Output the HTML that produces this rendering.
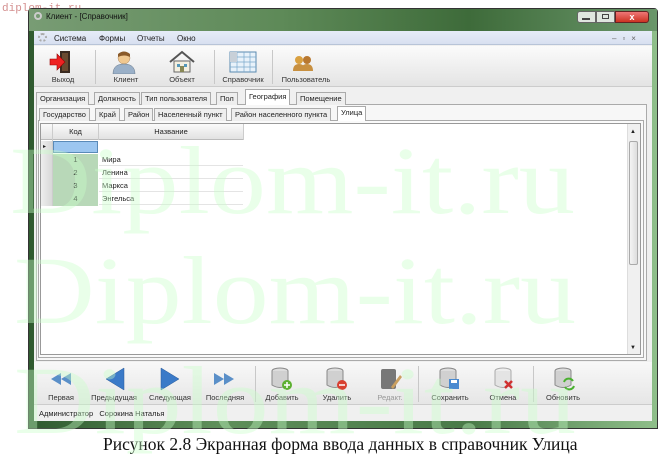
<!DOCTYPE html>
<html><head><meta charset="utf-8">
<style>
*{margin:0;padding:0;box-sizing:border-box}
body{width:671px;height:460px;background:#fff;position:relative;overflow:hidden;font-family:"Liberation Sans","DejaVu Sans",sans-serif;font-size:8px;color:#222}
.a{position:absolute}
.tab{position:absolute;height:13px;border:1px solid #aaa;border-bottom:none;background:#eee;font-size:7.5px;line-height:12px;padding:0 3px;white-space:nowrap}
.btn{position:absolute;text-align:center;font-size:7.5px;color:#333}
.sep{position:absolute;width:1px;background:#c8c8c8}
.cell{position:absolute;font-size:7.5px;line-height:12px}
</style></head><body>
<div class="a" style="left:2px;top:3px;font-family:'Liberation Mono',monospace;font-size:11px;color:#d49090">diplom-it.ru</div>
<div class="a" style="left:28px;top:8px;width:630px;height:421px;background:linear-gradient(90deg,#2f5a2f,#5f8f5a 30%,#497a48 70%,#8fbf8a);border:1px solid #333;border-radius:4px 4px 0 0"></div>
<div class="a" style="left:29px;top:9px;width:628px;height:22px;background:linear-gradient(90deg,#789c74,#5e8a58 40%,#3e6b3a 70%,#6a966a)"></div>
<div class="a" style="left:34px;top:12px;width:8px;height:8px;border-radius:50%;border:2px solid #ccc"></div>
<div class="a" style="left:46px;top:12px;font-size:8px;color:#111">Клиент - [Справочник]</div>
<div class="a" style="left:577px;top:11px;width:19px;height:12px;background:#dfe6df;border:1px solid #666;border-radius:3px 0 0 3px"></div>
<div class="a" style="left:582px;top:18px;width:8px;height:2px;background:#444"></div>
<div class="a" style="left:596px;top:11px;width:19px;height:12px;background:#dfe6df;border:1px solid #666"></div>
<div class="a" style="left:602px;top:14px;width:7px;height:5px;border:1px solid #444"></div>
<div class="a" style="left:615px;top:11px;width:34px;height:12px;background:linear-gradient(#e77,#c32);border:1px solid #622;border-radius:0 3px 3px 0;color:#fff;font-size:9px;text-align:center;line-height:10px;font-weight:bold">x</div>
<div class="a" style="left:34px;top:31px;width:618px;height:390px;background:#f0f0f0"></div>
<div class="a" style="left:34px;top:31px;width:618px;height:14px;background:linear-gradient(#e6ecf8,#d8e0f0);border-bottom:1px solid #b8c4d8"></div>
<div class="a" style="left:38px;top:33px;width:9px;height:9px;border-radius:50%;border:2px dotted #aaa"></div>
<div class="a" style="left:54px;top:34px;font-size:8px">Система</div>
<div class="a" style="left:99px;top:34px;font-size:8px">Формы</div>
<div class="a" style="left:137px;top:34px;font-size:8px">Отчеты</div>
<div class="a" style="left:177px;top:34px;font-size:8px">Окно</div>
<div class="a" style="left:612px;top:34px;font-size:8px;color:#666;letter-spacing:6px">–▫×</div>
<div class="a" style="left:34px;top:46px;width:618px;height:41px;background:linear-gradient(#fbfbfb,#e4e4e4);border-bottom:1px solid #ccc"></div>
<svg class="a" style="left:48px;top:50px" width="28" height="24"><rect x="12" y="1" width="10" height="22" fill="#3a2a20"/><rect x="14" y="3" width="6" height="18" fill="#6a4a30"/><path d="M2 9h7v-5l8 8-8 8v-5H2z" fill="#e22" stroke="#900" stroke-width=".6"/></svg>
<div class="btn" style="left:46px;top:75px;width:34px">Выход</div>
<div class="sep" style="left:95px;top:50px;height:34px"></div>
<svg class="a" style="left:112px;top:50px" width="24" height="24"><circle cx="12" cy="8" r="6" fill="#f0c890" stroke="#a86" stroke-width=".5"/><path d="M6 4q6-5 12 0v3q-6-3-12 0z" fill="#8a5a2a"/><path d="M1 24q0-10 11-10t11 10z" fill="#9ab0c8" stroke="#678" stroke-width=".5"/></svg>
<div class="btn" style="left:106px;top:75px;width:40px">Клиент</div>
<svg class="a" style="left:168px;top:50px" width="28" height="24"><path d="M2 12L14 2l12 10" fill="none" stroke="#555" stroke-width="2"/><rect x="6" y="11" width="16" height="11" fill="#f4f0e0" stroke="#666"/><rect x="9" y="14" width="3" height="3" fill="#59b"/><rect x="16" y="14" width="3" height="3" fill="#59b"/><rect x="12" y="16" width="4" height="6" fill="#885"/></svg>
<div class="btn" style="left:162px;top:75px;width:40px">Объект</div>
<div class="sep" style="left:214px;top:50px;height:34px"></div>
<svg class="a" style="left:229px;top:51px" width="28" height="22"><rect x="1" y="1" width="26" height="20" fill="#e8f2fa" stroke="#5a8ab0"/><path d="M1 6h26M1 11h26M1 16h26M8 1v20M15 1v20M21 1v20" stroke="#7aa8cc" stroke-width=".7"/><rect x="1" y="1" width="7" height="10" fill="#c8d0d8"/></svg>
<div class="btn" style="left:219px;top:75px;width:48px">Справочник</div>
<div class="sep" style="left:272px;top:50px;height:34px"></div>
<svg class="a" style="left:293px;top:55px" width="20" height="16"><circle cx="6" cy="5" r="4" fill="#d9a040"/><circle cx="14" cy="5" r="4" fill="#b87830"/><path d="M0 16q0-7 6-7t6 7zM8 16q0-7 6-7t6 7z" fill="#c89040"/></svg>
<div class="btn" style="left:278px;top:75px;width:56px">Пользователь</div>
<div class="a" style="left:36px;top:104px;width:611px;height:257px;border:1px solid #aaa;background:#f7f7f7"></div>
<div class="tab" style="left:36px;top:92px">Организация</div>
<div class="tab" style="left:94px;top:92px">Должность</div>
<div class="tab" style="left:141px;top:92px">Тип пользователя</div>
<div class="tab" style="left:216px;top:92px">Пол</div>
<div class="tab" style="left:245px;top:89px;height:16px;background:#fff;padding-top:1px">География</div>
<div class="tab" style="left:296px;top:92px">Помещение</div>
<div class="a" style="left:38px;top:120px;width:606px;height:238px;border:1px solid #aaa;background:#fafafa"></div>
<div class="tab" style="left:39px;top:108px">Государство</div>
<div class="tab" style="left:95px;top:108px">Край</div>
<div class="tab" style="left:124px;top:108px">Район</div>
<div class="tab" style="left:154px;top:108px">Населенный пункт</div>
<div class="tab" style="left:231px;top:108px">Район населенного пункта</div>
<div class="tab" style="left:337px;top:106px;height:15px;background:#fff">Улица</div>
<div class="a" style="left:40px;top:123px;width:601px;height:232px;border:1px solid #999;background:#fff"></div>
<div class="a" style="left:41px;top:124px;width:202px;height:16px;background:linear-gradient(#fafafa,#e2e2e2);border-bottom:1px solid #bbb"></div>
<div class="a" style="left:52px;top:124px;width:1px;height:82px;background:#ccc"></div>
<div class="a" style="left:98px;top:124px;width:1px;height:16px;background:#ccc"></div>
<div class="a" style="left:243px;top:124px;width:1px;height:16px;background:#ccc"></div>
<div class="cell" style="left:53px;top:126px;width:45px;text-align:center">Код</div>
<div class="cell" style="left:99px;top:126px;width:144px;text-align:center">Название</div>
<div class="a" style="left:41px;top:141px;width:11px;height:65px;background:linear-gradient(90deg,#eee,#d8d8d8)"></div>
<div class="cell" style="left:43px;top:141px;font-size:6px">▸</div>
<div class="a" style="left:53px;top:141px;width:45px;height:12px;background:#9cc6f0;border:1px solid #5a8ab8"></div>
<div class="a" style="left:53px;top:154px;width:45px;height:52px;background:#b8d8b8"></div>
<div class="cell" style="left:53px;top:154px;width:45px;text-align:center">1</div>
<div class="cell" style="left:102px;top:154px">Мира</div>
<div class="cell" style="left:53px;top:167px;width:45px;text-align:center">2</div>
<div class="cell" style="left:102px;top:167px">Ленина</div>
<div class="cell" style="left:53px;top:180px;width:45px;text-align:center">3</div>
<div class="cell" style="left:102px;top:180px">Маркса</div>
<div class="cell" style="left:53px;top:193px;width:45px;text-align:center">4</div>
<div class="cell" style="left:102px;top:193px">Энгельса</div>
<div class="a" style="left:99px;top:153px;width:144px;height:53px;background:repeating-linear-gradient(transparent 0 12px,#e4e4e4 12px 13px)"></div>
<div class="a" style="left:627px;top:124px;width:13px;height:230px;background:#f0f0f0;border-left:1px solid #ddd"></div>
<div class="cell" style="left:630px;top:126px;font-size:6px">▲</div>
<div class="a" style="left:629px;top:141px;width:9px;height:124px;background:linear-gradient(90deg,#f4f4f4,#ddd);border:1px solid #aaa;border-radius:2px"></div>
<div class="cell" style="left:630px;top:342px;font-size:6px">▼</div>
<div class="a" style="left:34px;top:362px;width:618px;height:43px;background:linear-gradient(#f8f8f8,#e6e6e6);border-bottom:1px solid #ccc"></div>
<svg class="a" style="left:50px;top:372px" width="22" height="14"><path d="M11 1L1 7l10 6zM21 1L11 7l10 6z" fill="#5a8fc8"/></svg>
<div class="btn" style="left:42px;top:393px;width:38px">Первая</div>
<svg class="a" style="left:105px;top:367px" width="20" height="24"><path d="M19 1L1 12l18 11z" fill="#3a7ac8" stroke="#2a5a98" stroke-width=".5"/></svg>
<div class="btn" style="left:86px;top:393px;width:56px">Предыдущая</div>
<svg class="a" style="left:160px;top:367px" width="20" height="24"><path d="M1 1l18 11L1 23z" fill="#3a7ac8" stroke="#2a5a98" stroke-width=".5"/></svg>
<div class="btn" style="left:142px;top:393px;width:56px">Следующая</div>
<svg class="a" style="left:213px;top:372px" width="22" height="14"><path d="M1 1l10 6-10 6zM11 1l10 6-10 6z" fill="#5a8fc8"/></svg>
<div class="btn" style="left:198px;top:393px;width:54px">Последняя</div>
<div class="sep" style="left:255px;top:366px;height:36px"></div>
<svg class="a" style="left:270px;top:367px" width="24" height="24"><ellipse cx="10" cy="4" rx="8" ry="3" fill="#ddd" stroke="#888"/><path d="M2 4v14q8 5 16 0V4" fill="#d0d0d0" stroke="#888"/><circle cx="17" cy="18" r="5" fill="#5cb030"/><path d="M17 15v6M14 18h6" stroke="#fff" stroke-width="1.5"/></svg>
<div class="btn" style="left:260px;top:393px;width:44px">Добавить</div>
<svg class="a" style="left:325px;top:367px" width="24" height="24"><ellipse cx="10" cy="4" rx="8" ry="3" fill="#ddd" stroke="#888"/><path d="M2 4v14q8 5 16 0V4" fill="#d0d0d0" stroke="#888"/><circle cx="17" cy="18" r="5" fill="#d84030"/><path d="M14 18h6" stroke="#fff" stroke-width="1.5"/></svg>
<div class="btn" style="left:315px;top:393px;width:44px">Удалить</div>
<svg class="a" style="left:379px;top:367px" width="24" height="24"><rect x="2" y="2" width="15" height="20" rx="2" fill="#777"/><path d="M12 20l9-12 2 2-9 12z" fill="#caa060"/></svg>
<div class="btn" style="left:370px;top:393px;width:40px;color:#999">Редакт.</div>
<div class="sep" style="left:418px;top:366px;height:36px"></div>
<svg class="a" style="left:438px;top:367px" width="24" height="24"><ellipse cx="10" cy="4" rx="8" ry="3" fill="#ddd" stroke="#888"/><path d="M2 4v14q8 5 16 0V4" fill="#d0d0d0" stroke="#888"/><rect x="11" y="12" width="10" height="10" fill="#4a8ad0"/><rect x="13" y="13" width="6" height="3" fill="#fff"/></svg>
<div class="btn" style="left:425px;top:393px;width:50px">Сохранить</div>
<svg class="a" style="left:493px;top:367px" width="24" height="24"><ellipse cx="10" cy="4" rx="8" ry="3" fill="#eee" stroke="#aaa"/><path d="M2 4v14q8 5 16 0V4" fill="#e4e4e4" stroke="#aaa"/><path d="M12 14l7 7M19 14l-7 7" stroke="#d03030" stroke-width="2.5"/></svg>
<div class="btn" style="left:483px;top:393px;width:40px">Отмена</div>
<div class="sep" style="left:533px;top:366px;height:36px"></div>
<svg class="a" style="left:553px;top:367px" width="24" height="24"><ellipse cx="10" cy="4" rx="8" ry="3" fill="#ddd" stroke="#888"/><path d="M2 4v14q8 5 16 0V4" fill="#d0d0d0" stroke="#888"/><path d="M11 15a5 5 0 0 1 9-1M21 19a5 5 0 0 1-9 1" fill="none" stroke="#4ab030" stroke-width="2"/></svg>
<div class="btn" style="left:538px;top:393px;width:50px">Обновить</div>
<div class="a" style="left:34px;top:406px;width:618px;height:15px;background:#f0f0f0"></div>
<div class="a" style="left:39px;top:409px;font-size:7.5px">Администратор&nbsp;&nbsp;&nbsp;Сорокина Наталья</div>
<div class="a" style="left:103px;top:434px;font-family:'Liberation Serif',serif;font-size:17.5px;color:#111;white-space:nowrap">Рисунок 2.8 Экранная форма ввода данных в справочник Улица</div>
<svg class="a" style="left:0;top:0;pointer-events:none" width="671" height="460">
<g font-family="Liberation Serif,serif" font-size="96" fill="#c8ffc8" fill-opacity="0.4">
<text x="10" y="213" textLength="565" lengthAdjust="spacingAndGlyphs">Diplom-it.ru</text>
<text x="14" y="323" textLength="562" lengthAdjust="spacingAndGlyphs">Diplom-it.ru</text>
<text x="14" y="433" textLength="562" lengthAdjust="spacingAndGlyphs">Diplom-it.ru</text>
</g></svg>
</body></html>
